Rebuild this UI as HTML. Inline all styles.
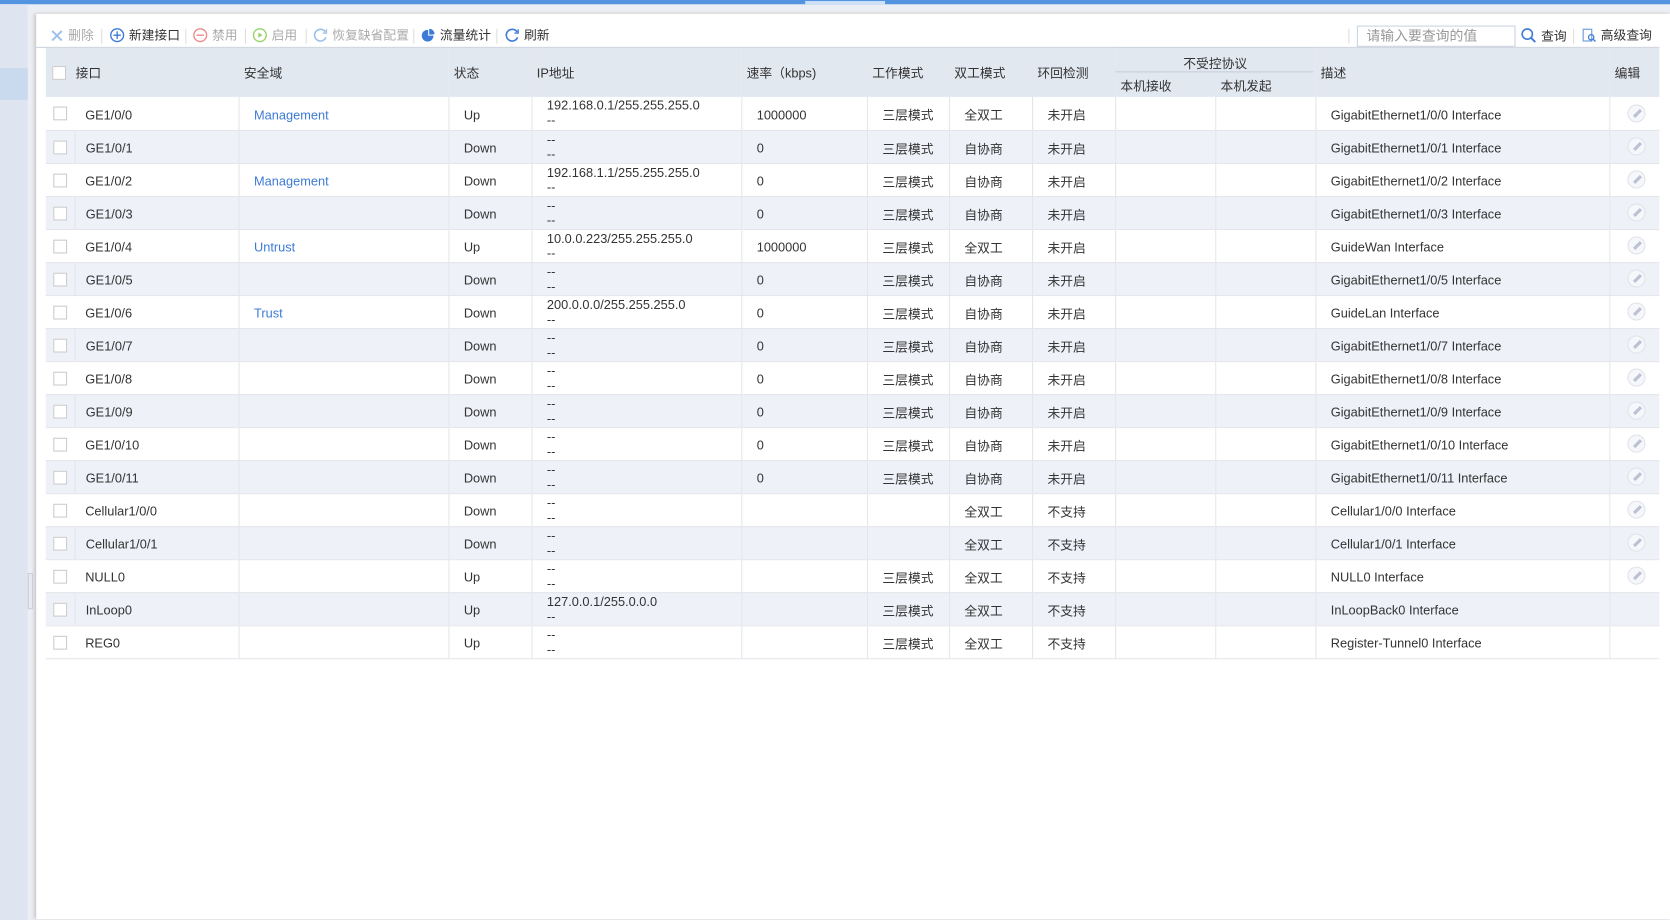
<!DOCTYPE html>
<html><head><meta charset="utf-8">
<style>
*{margin:0;padding:0;box-sizing:border-box}
html,body{width:1670px;height:918px;overflow:hidden;background:#eceef5}
#w{position:absolute;left:0;top:0;width:1568px;height:862px;transform:scale(1.06505);transform-origin:0 0;font-family:"Liberation Sans","Noto Sans CJK SC",sans-serif;font-size:12px;color:#333}
.top{position:absolute;left:0;top:0;width:1568px;height:4px;background:#5294e0}
.tseg{position:absolute;left:756px;top:1px;width:75px;height:3px;background:#cfe1f7}
.side{position:absolute;left:0;top:4px;width:26px;height:860px;background:#dfe5f0}
.sideh{position:absolute;left:0;top:64px;width:26px;height:30px;background:#c9d9ee}
.panel{position:absolute;left:34px;top:13px;width:1534px;height:850px;background:#fff;box-shadow:-2px 0 3px #ccc,0 -1px 2px #ddd}
.tb{position:absolute;top:26px;height:14px;line-height:14px;font-size:12px;white-space:nowrap}
.g{color:#aaa}
.sep{position:absolute;top:27px;width:1px;height:14px;background:#ddd}
.ic{display:inline-block;vertical-align:-3px;margin-right:4px}
table{position:absolute;left:43px;top:45px;width:1515px;border-collapse:collapse;table-layout:fixed}
th{background:#e2e8f0;font-weight:normal;text-align:left;height:46px;padding-left:5px;font-size:12px;color:#333}
td{height:31px;border-bottom:1px solid #e4e6ea;border-left:1px solid #e4e6ea;padding-left:14px;padding-top:3px;font-size:12px;white-space:nowrap}
td:first-child{border-left:none;padding-left:7px;padding-top:0}
td:nth-child(2){border-left:none;padding-left:10px}
td:last-child{padding-left:16px;padding-top:0}
tr.a td{background:#eef1f8}
tr.a td:nth-child(2){border-left:1px solid #e4e6ea}
.cb{display:inline-block;width:13px;height:13px;border:1px solid #ccc;background:#fff;vertical-align:middle}
td.ip{line-height:14px;padding-top:0}
a{color:#3d7bd6;text-decoration:none}
.ed{display:inline-block;width:17px;height:17px;border-radius:50%;border:1px solid #e0e3ea;background:#f6f7fa;position:relative;vertical-align:middle}
.ed:after{content:"";position:absolute;left:7px;top:3px;width:3px;height:9px;background:#bcc2d4;transform:rotate(45deg)}
</style></head><body><div id="w">
<div class="top"></div><div class="tseg"></div>
<div class="side"></div><div class="sideh"></div>
<div class="panel"></div>

<div class="tb g" style="left:47px"><svg class="ic" width="13" height="13"><path d="M2 2L11 11M11 2L2 11" stroke="#9cc0ea" stroke-width="1.8"/></svg>删除</div>
<div class="sep" style="left:95px"></div>
<div class="tb" style="left:103px"><svg class="ic" width="14" height="14"><circle cx="7" cy="7" r="6" fill="none" stroke="#3d7bd6" stroke-width="1.3"/><path d="M7 3.5V10.5M3.5 7H10.5" stroke="#3d7bd6" stroke-width="1.3"/></svg>新建接口</div>
<div class="sep" style="left:174px"></div>
<div class="tb g" style="left:181px"><svg class="ic" width="14" height="14"><circle cx="7" cy="7" r="6" fill="none" stroke="#f08a8a" stroke-width="1.3"/><path d="M3.5 7H10.5" stroke="#f08a8a" stroke-width="1.3"/></svg>禁用</div>
<div class="sep" style="left:230px"></div>
<div class="tb g" style="left:237px"><svg class="ic" width="14" height="14"><circle cx="7" cy="7" r="6" fill="none" stroke="#9ad36a" stroke-width="1.3"/><path d="M5.5 4.5L9.5 7L5.5 9.5Z" fill="#9ad36a"/></svg>启用</div>
<div class="sep" style="left:287px"></div>
<div class="tb g" style="left:294px"><svg class="ic" width="14" height="14"><path d="M11.5 4A5.5 5.5 0 1 0 12 9" fill="none" stroke="#9cc0ea" stroke-width="1.5"/><path d="M12.5 1.5V5H9" fill="none" stroke="#9cc0ea" stroke-width="1.3"/></svg>恢复缺省配置</div>
<div class="sep" style="left:388px"></div>
<div class="tb" style="left:395px"><svg class="ic" width="14" height="14"><circle cx="6.5" cy="7.5" r="5.5" fill="#3d7bd6"/><path d="M8 1A5 5 0 0 1 13 6H8Z" fill="#3d7bd6"/><path d="M7.5 2V7H12.5" stroke="#fff" fill="none"/></svg>流量统计</div>
<div class="sep" style="left:466px"></div>
<div class="tb" style="left:474px"><svg class="ic" width="14" height="14"><path d="M11.5 4A5.5 5.5 0 1 0 12 9" fill="none" stroke="#3d7bd6" stroke-width="1.5"/><path d="M12.5 1.5V5H9" fill="none" stroke="#3d7bd6" stroke-width="1.3"/></svg>刷新</div>

<div class="sep" style="left:1266px"></div>
<div style="position:absolute;left:1274px;top:24px;width:149px;height:20px;border:1px solid #c9d3e2;background:#fff;color:#999;font-size:13px;line-height:18px;padding-left:8px">请输入要查询的值</div>
<div class="tb" style="left:1428px"><svg class="ic" width="15" height="15"><circle cx="6" cy="6" r="4.8" fill="none" stroke="#3d7bd6" stroke-width="1.5"/><path d="M9.5 9.5L13.5 13.5" stroke="#3d7bd6" stroke-width="1.8"/></svg>查询</div>
<div class="sep" style="left:1477px"></div>
<div class="tb" style="left:1485px"><svg class="ic" width="14" height="14"><rect x="1.5" y="1.5" width="8" height="11" fill="none" stroke="#7aa5df" stroke-width="1.2"/><circle cx="9" cy="9" r="2.5" fill="none" stroke="#3d7bd6" stroke-width="1.2"/><path d="M10.8 10.8L13 13" stroke="#3d7bd6" stroke-width="1.3"/></svg>高级查询</div>

<div style="position:absolute;left:34px;top:44px;width:1524px;height:1px;background:#cdd3dd"></div>

<table>
<colgroup><col style="width:27px"><col style="width:154px"><col style="width:197px"><col style="width:78px"><col style="width:197px"><col style="width:118px"><col style="width:77px"><col style="width:78px"><col style="width:78px"><col style="width:94px"><col style="width:94px"><col style="width:276px"><col style="width:47px"></colgroup>
<tr><th style="padding-left:6px"><span class="cb"></span></th><th style="padding-left:1px">接口</th><th>安全域</th><th>状态</th><th>IP地址</th><th>速率（kbps)</th><th>工作模式</th><th>双工模式</th><th>环回检测</th>
<th colspan="2" style="padding:0;position:relative"><div style="position:absolute;top:6px;left:0;width:188px;text-align:center">不受控协议</div><div style="position:absolute;top:22px;left:0;width:186px;height:1px;background:#c8ced8"></div><div style="position:absolute;top:27px;left:5px">本机接收</div><div style="position:absolute;top:27px;left:99px">本机发起</div></th>
<th>描述</th><th>编辑</th></tr>

<tr><td><span class="cb"></span></td><td>GE1/0/0</td><td><a>Management</a></td><td>Up</td><td class="ip">192.168.0.1/255.255.255.0<br>--</td><td>1000000</td><td>三层模式</td><td>全双工</td><td>未开启</td><td></td><td></td><td>GigabitEthernet1/0/0 Interface</td><td><span class="ed"></span></td></tr>
<tr class="a"><td><span class="cb"></span></td><td>GE1/0/1</td><td></td><td>Down</td><td class="ip">--<br>--</td><td>0</td><td>三层模式</td><td>自协商</td><td>未开启</td><td></td><td></td><td>GigabitEthernet1/0/1 Interface</td><td><span class="ed"></span></td></tr>
<tr><td><span class="cb"></span></td><td>GE1/0/2</td><td><a>Management</a></td><td>Down</td><td class="ip">192.168.1.1/255.255.255.0<br>--</td><td>0</td><td>三层模式</td><td>自协商</td><td>未开启</td><td></td><td></td><td>GigabitEthernet1/0/2 Interface</td><td><span class="ed"></span></td></tr>
<tr class="a"><td><span class="cb"></span></td><td>GE1/0/3</td><td></td><td>Down</td><td class="ip">--<br>--</td><td>0</td><td>三层模式</td><td>自协商</td><td>未开启</td><td></td><td></td><td>GigabitEthernet1/0/3 Interface</td><td><span class="ed"></span></td></tr>
<tr><td><span class="cb"></span></td><td>GE1/0/4</td><td><a>Untrust</a></td><td>Up</td><td class="ip">10.0.0.223/255.255.255.0<br>--</td><td>1000000</td><td>三层模式</td><td>全双工</td><td>未开启</td><td></td><td></td><td>GuideWan Interface</td><td><span class="ed"></span></td></tr>
<tr class="a"><td><span class="cb"></span></td><td>GE1/0/5</td><td></td><td>Down</td><td class="ip">--<br>--</td><td>0</td><td>三层模式</td><td>自协商</td><td>未开启</td><td></td><td></td><td>GigabitEthernet1/0/5 Interface</td><td><span class="ed"></span></td></tr>
<tr><td><span class="cb"></span></td><td>GE1/0/6</td><td><a>Trust</a></td><td>Down</td><td class="ip">200.0.0.0/255.255.255.0<br>--</td><td>0</td><td>三层模式</td><td>自协商</td><td>未开启</td><td></td><td></td><td>GuideLan Interface</td><td><span class="ed"></span></td></tr>
<tr class="a"><td><span class="cb"></span></td><td>GE1/0/7</td><td></td><td>Down</td><td class="ip">--<br>--</td><td>0</td><td>三层模式</td><td>自协商</td><td>未开启</td><td></td><td></td><td>GigabitEthernet1/0/7 Interface</td><td><span class="ed"></span></td></tr>
<tr><td><span class="cb"></span></td><td>GE1/0/8</td><td></td><td>Down</td><td class="ip">--<br>--</td><td>0</td><td>三层模式</td><td>自协商</td><td>未开启</td><td></td><td></td><td>GigabitEthernet1/0/8 Interface</td><td><span class="ed"></span></td></tr>
<tr class="a"><td><span class="cb"></span></td><td>GE1/0/9</td><td></td><td>Down</td><td class="ip">--<br>--</td><td>0</td><td>三层模式</td><td>自协商</td><td>未开启</td><td></td><td></td><td>GigabitEthernet1/0/9 Interface</td><td><span class="ed"></span></td></tr>
<tr><td><span class="cb"></span></td><td>GE1/0/10</td><td></td><td>Down</td><td class="ip">--<br>--</td><td>0</td><td>三层模式</td><td>自协商</td><td>未开启</td><td></td><td></td><td>GigabitEthernet1/0/10 Interface</td><td><span class="ed"></span></td></tr>
<tr class="a"><td><span class="cb"></span></td><td>GE1/0/11</td><td></td><td>Down</td><td class="ip">--<br>--</td><td>0</td><td>三层模式</td><td>自协商</td><td>未开启</td><td></td><td></td><td>GigabitEthernet1/0/11 Interface</td><td><span class="ed"></span></td></tr>
<tr><td><span class="cb"></span></td><td>Cellular1/0/0</td><td></td><td>Down</td><td class="ip">--<br>--</td><td></td><td></td><td>全双工</td><td>不支持</td><td></td><td></td><td>Cellular1/0/0 Interface</td><td><span class="ed"></span></td></tr>
<tr class="a"><td><span class="cb"></span></td><td>Cellular1/0/1</td><td></td><td>Down</td><td class="ip">--<br>--</td><td></td><td></td><td>全双工</td><td>不支持</td><td></td><td></td><td>Cellular1/0/1 Interface</td><td><span class="ed"></span></td></tr>
<tr><td><span class="cb"></span></td><td>NULL0</td><td></td><td>Up</td><td class="ip">--<br>--</td><td></td><td>三层模式</td><td>全双工</td><td>不支持</td><td></td><td></td><td>NULL0 Interface</td><td><span class="ed"></span></td></tr>
<tr class="a"><td><span class="cb"></span></td><td>InLoop0</td><td></td><td>Up</td><td class="ip">127.0.0.1/255.0.0.0<br>--</td><td></td><td>三层模式</td><td>全双工</td><td>不支持</td><td></td><td></td><td>InLoopBack0 Interface</td><td></td></tr>
<tr><td><span class="cb"></span></td><td>REG0</td><td></td><td>Up</td><td class="ip">--<br>--</td><td></td><td>三层模式</td><td>全双工</td><td>不支持</td><td></td><td></td><td>Register-Tunnel0 Interface</td><td></td></tr>
</table>
<div style="position:absolute;left:26px;top:538px;width:5px;height:34px;border:1px solid #ccd;background:#e6e9f0"></div>
</div></body></html>
